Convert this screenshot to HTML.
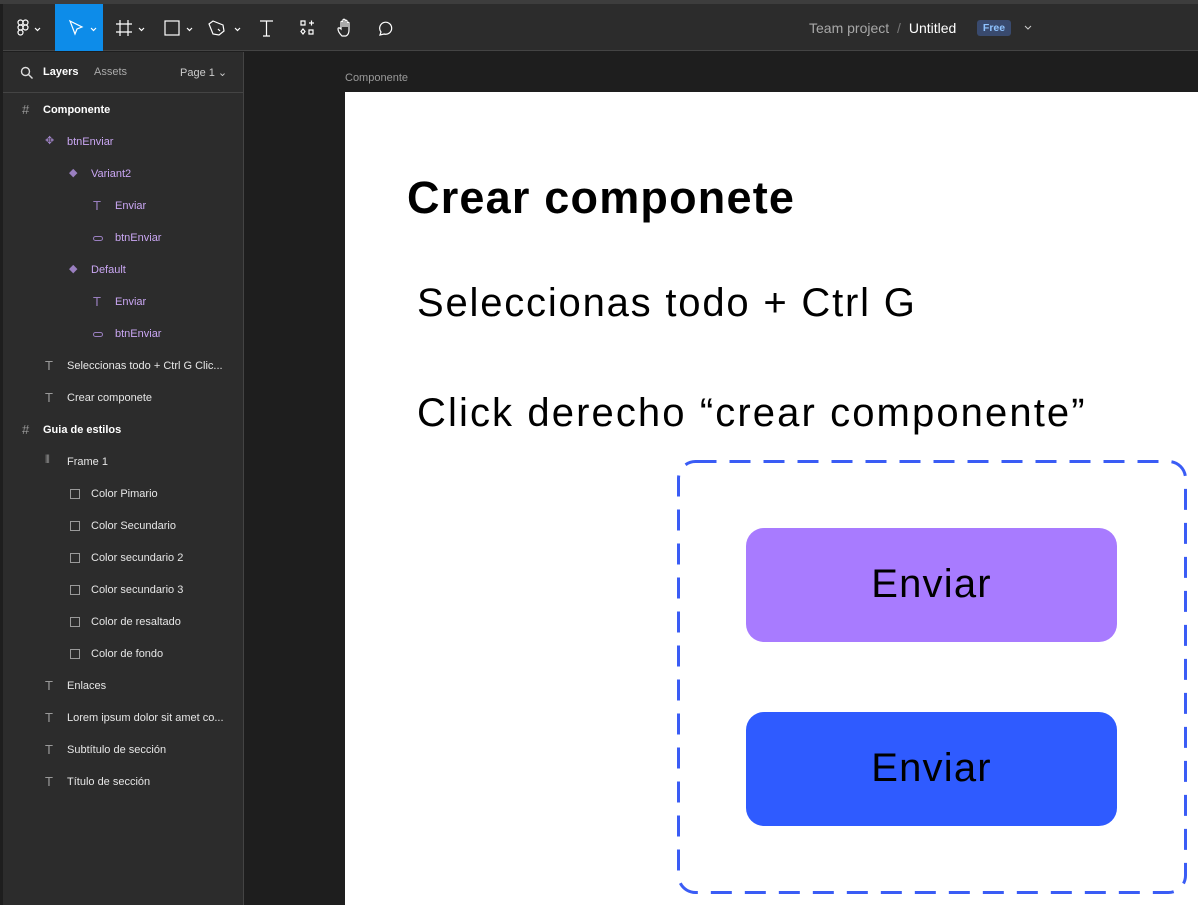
<!DOCTYPE html>
<html><head><meta charset="utf-8"><style>
*{margin:0;padding:0;box-sizing:border-box}
body{width:1198px;height:905px;overflow:hidden;background:#1e1e1e;font-family:"Liberation Sans",sans-serif;position:relative}
.top{position:absolute;left:0;top:0;width:1198px;height:4px;background:#3d3d3d}
.tb{position:absolute;left:3px;top:4px;width:1195px;height:47px;background:#2c2c2c;border-bottom:1px solid #444}
.panel{position:absolute;left:3px;top:52px;width:241px;height:853px;background:#2c2c2c;border-right:1px solid #444}
.edge{position:absolute;left:0;top:4px;width:3px;height:901px;background:#1e1e1e}
.row{position:absolute;font-size:11px;color:#e6e6e6;white-space:nowrap}
.p{color:#c9a6f2}
.ico{position:absolute;color:#9a9a9a;font-size:13px}
.frame{position:absolute;left:345px;top:92px;width:853px;height:813px;background:#fff}
.t{position:absolute;font-family:"Liberation Sans",sans-serif;color:#000;white-space:nowrap}
.btn{position:absolute;left:746px;width:371px;height:114px;border-radius:18px;font-size:40px;text-align:center;line-height:112px;color:#000;letter-spacing:1.2px}
</style></head><body>
<div class="top"></div>
<div class="tb"></div>
<div class="edge"></div>
<div style="position:absolute;left:55px;top:4px;width:48px;height:47px;background:#0d8ce9"></div>
<svg style="position:absolute;left:0;top:4px" width="420" height="47" fill="none" stroke="#fff" stroke-width="1.2">
<g transform="translate(18,16)"><rect x="0" y="0" width="5" height="5" rx="2.5"/><rect x="5" y="0" width="5" height="5" rx="2.5"/><rect x="0" y="5" width="5" height="5" rx="2.5"/><circle cx="7.5" cy="7.5" r="2.5"/><rect x="0" y="10" width="5" height="5" rx="2.5"/></g>
<path d="M35 24l2.5 2.5 2.5-2.5M91 24l2.5 2.5 2.5-2.5M139 24l2.5 2.5 2.5-2.5M187 24l2.5 2.5 2.5-2.5M235 24l2.5 2.5 2.5-2.5"/>
<path d="M70 17l12 6-5 2-2 5z"/>
<path d="M120 16v16M128 16v16M116 20h16M116 28h16"/>
<rect x="165" y="17" width="14" height="14"/>
<path d="M213 17l10 4 1 6-5 4-6-1-4-10z M218 25l2 2"/>
<path d="M260 17h13M266.5 17v15M263 32h7"/>
<path d="M301 17h4v4h-4zM309 19h5M311.5 16.5v5M303 25l2 2.5-2 2.5-2-2.5zM309 26h4v4h-4z"/>
<path d="M342 32c-2-2-4-5-4-7s2-1 3 0v-7c0-1 2-1 2 0v5-7c0-1 2-1 2 0v7-6c0-1 2-1 2 0v6-4c0-1 2-1 2 0v7c0 3-1 5-3 6z"/>
<path d="M380 31l1-3a6 6 0 1 1 3 2z"/>
</svg>
<div class="row" style="left:809px;top:20px;font-size:14px;color:#a8a8a8">Team project <span style="color:#777;margin:0 4px">/</span> <span style="color:#fff">Untitled</span></div>
<div style="position:absolute;left:977px;top:20px;width:34px;height:16px;background:#394a6e;border-radius:3px;color:#8fc3ff;font-size:10.5px;font-weight:bold;text-align:center;line-height:16px">Free</div>
<svg style="position:absolute;left:1024px;top:25px" width="10" height="6" fill="none" stroke="#ccc"><path d="M1 1l3 3 3-3"/></svg>
<div class="panel"></div>
<div style="position:absolute;left:3px;top:92px;width:241px;height:1px;background:#444"></div>
<svg style="position:absolute;left:20px;top:66px" width="14" height="14" fill="none" stroke="#ddd" stroke-width="1.4"><circle cx="5.5" cy="5.5" r="4"/><path d="M8.5 8.5l4 4"/></svg>
<div class="row" style="left:43px;top:66px;font-weight:bold;color:#fff">Layers</div>
<div class="row" style="left:94px;top:66px;color:#aaa">Assets</div>
<div class="row" style="left:180px;top:66px;color:#ccc">Page 1 ⌄</div>
<div class="ico" style="left:22px;top:102px">#</div><div class="row" style="left:43px;top:104px;font-weight:bold;color:#fff">Componente</div>
<div class="ico p" style="left:45px;top:134px;font-size:11px;color:#9a7fc0">✥</div><div class="row p" style="left:67px;top:136px">btnEnviar</div>
<div class="ico" style="left:69px;top:166px;font-size:11px;color:#9a7fc0">◆</div><div class="row p" style="left:91px;top:168px">Variant2</div>
<div class="ico" style="left:93px;top:198px;color:#9a7fc0">T</div><div class="row p" style="left:115px;top:200px">Enviar</div>
<div style="position:absolute;left:93px;top:236px;width:10px;height:5px;border:1px solid #9a7fc0;border-radius:3px"></div><div class="row p" style="left:115px;top:232px">btnEnviar</div>
<div class="ico" style="left:69px;top:262px;font-size:11px;color:#9a7fc0">◆</div><div class="row p" style="left:91px;top:264px">Default</div>
<div class="ico" style="left:93px;top:294px;color:#9a7fc0">T</div><div class="row p" style="left:115px;top:296px">Enviar</div>
<div style="position:absolute;left:93px;top:332px;width:10px;height:5px;border:1px solid #9a7fc0;border-radius:3px"></div><div class="row p" style="left:115px;top:328px">btnEnviar</div>
<div class="ico" style="left:45px;top:358px">T</div><div class="row" style="left:67px;top:360px">Seleccionas todo + Ctrl G Clic...</div>
<div class="ico" style="left:45px;top:390px">T</div><div class="row" style="left:67px;top:392px">Crear componete</div>
<div class="ico" style="left:22px;top:422px">#</div><div class="row" style="left:43px;top:424px;font-weight:bold;color:#fff">Guia de estilos</div>
<div class="ico" style="left:45px;top:454px;font-size:11px">⦀</div><div class="row" style="left:67px;top:456px">Frame 1</div>
<div style="position:absolute;left:70px;top:489px;width:10px;height:10px;border:1px solid #9a9a9a"></div><div class="row" style="left:91px;top:488px">Color Pimario</div>
<div style="position:absolute;left:70px;top:521px;width:10px;height:10px;border:1px solid #9a9a9a"></div><div class="row" style="left:91px;top:520px">Color Secundario</div>
<div style="position:absolute;left:70px;top:553px;width:10px;height:10px;border:1px solid #9a9a9a"></div><div class="row" style="left:91px;top:552px">Color secundario 2</div>
<div style="position:absolute;left:70px;top:585px;width:10px;height:10px;border:1px solid #9a9a9a"></div><div class="row" style="left:91px;top:584px">Color secundario 3</div>
<div style="position:absolute;left:70px;top:617px;width:10px;height:10px;border:1px solid #9a9a9a"></div><div class="row" style="left:91px;top:616px">Color de resaltado</div>
<div style="position:absolute;left:70px;top:649px;width:10px;height:10px;border:1px solid #9a9a9a"></div><div class="row" style="left:91px;top:648px">Color de fondo</div>
<div class="ico" style="left:45px;top:678px">T</div><div class="row" style="left:67px;top:680px">Enlaces</div>
<div class="ico" style="left:45px;top:710px">T</div><div class="row" style="left:67px;top:712px">Lorem ipsum dolor sit amet co...</div>
<div class="ico" style="left:45px;top:742px">T</div><div class="row" style="left:67px;top:744px">Subtítulo de sección</div>
<div class="ico" style="left:45px;top:774px">T</div><div class="row" style="left:67px;top:776px">Título de sección</div>
<div class="row" style="left:345px;top:72px;font-size:11px;color:#9a9a9a">Componente</div>
<div class="frame"></div>
<div class="t" style="left:407px;top:172px;font-size:45px;font-weight:bold;letter-spacing:1.2px">Crear componete</div>
<div class="t" style="left:417px;top:281px;font-size:40px;letter-spacing:1.8px">Seleccionas todo + Ctrl G</div>
<div class="t" style="left:417px;top:391px;font-size:40px;letter-spacing:2.1px">Click derecho “crear componente”</div>
<svg style="position:absolute;left:676px;top:459px" width="513" height="437"><rect x="2.5" y="2.5" width="507" height="431" rx="17" fill="none" stroke="#3a5cf5" stroke-width="3" stroke-dasharray="21 13"/></svg>
<div class="btn" style="top:528px;background:#a87bff">Enviar</div>
<div class="btn" style="top:712px;background:#2f5bff">Enviar</div>
</body></html>
